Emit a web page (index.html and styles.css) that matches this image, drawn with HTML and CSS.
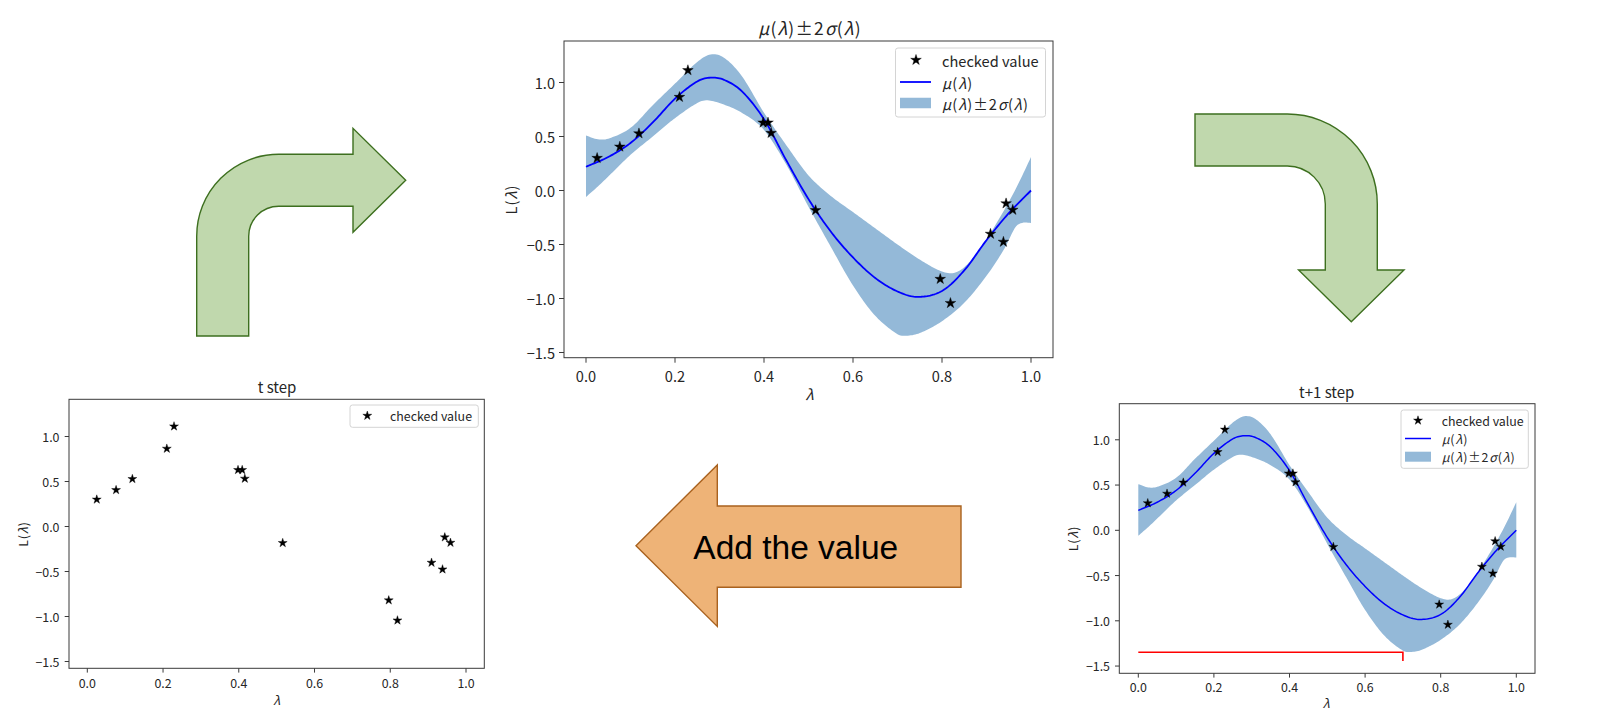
FILE: index.html
```html
<!DOCTYPE html>
<html lang="en">
<head>
<meta charset="utf-8">
<title>Bayesian optimization: t step to t+1 step</title>
<link rel="stylesheet" href="styles.css">
</head>
<body>
<main class="slide">
  <svg class="fig fig--left plot plot--side" id="plot-left" viewBox="0 370 500 346" aria-label="t step"></svg>
  <svg class="fig fig--top plot plot--top" id="plot-top" viewBox="480 0 600 410" aria-label="mu plus minus two sigma"></svg>
  <svg class="fig fig--right plot plot--side" id="plot-right" viewBox="1040 370 560 346" aria-label="t+1 step"></svg>

  <svg class="fig fig--arrow-in" viewBox="180 115 240 235" aria-hidden="true">
    <path class="arrow arrow--green" d="M196.7,336 L196.7,236.3 A82,82 0 0 1 278.7,154.3 L353,154.3 L353,128.3 L405.7,180.3 L353,232.3 L353,206.3 L278.7,206.3 A30,30 0 0 0 248.7,236.3 L248.7,336 Z"/>
  </svg>
  <svg class="fig fig--arrow-out" viewBox="1180 100 240 240" aria-hidden="true">
    <path class="arrow arrow--green" d="M1195,114 L1287.3,114 A90,90 0 0 1 1377.3,204 L1377.3,270 L1404,270 L1351.3,321.7 L1298.6,270 L1325.3,270 L1325.3,204 A38,38 0 0 0 1287.3,166 L1195,166 Z"/>
  </svg>
  <svg class="fig fig--arrow-add" viewBox="620 450 360 190">
    <path class="arrow arrow--orange" d="M636,545.7 L717.3,465 L717.3,506 L961,506 L961,587.3 L717.3,587.3 L717.3,626.4 Z"/>
    <text class="arrow-text" x="693.3" y="547" dominant-baseline="central">Add the value</text>
  </svg>
</main>
<script src="script.js"></script>
</body>
</html>
```

FILE: styles.css
```css
html, body {
  margin: 0;
  padding: 0;
  background: #ffffff;
}

.slide {
  position: relative;
  width: 1600px;
  height: 716px;
  overflow: hidden;
  background: #ffffff;
  font-family: "Noto Sans CJK JP", "Noto Sans", sans-serif;
}

.fig {
  position: absolute;
  display: block;
  overflow: visible;
}

.fig--left { left: 0; top: 370px; width: 500px; height: 346px; }
.fig--top { left: 480px; top: 0; width: 600px; height: 410px; }
.fig--right { left: 1040px; top: 370px; width: 560px; height: 346px; }
.fig--arrow-in { left: 180px; top: 115px; width: 240px; height: 235px; }
.fig--arrow-out { left: 1180px; top: 100px; width: 240px; height: 240px; }
.fig--arrow-add { left: 620px; top: 450px; width: 360px; height: 190px; }

.arrow { stroke-width: 1.4; stroke-linejoin: miter; }
.arrow--green { fill: #c0d8ad; stroke: #3d6f1f; }
.arrow--orange { fill: #eeb377; stroke: #a9621f; }

.arrow-text {
  font-family: "Liberation Sans", Arial, sans-serif;
  font-size: 33.5px;
  fill: #000000;
}

.plot text {
  fill: #262626;
  font-family: "Noto Sans CJK JP", "Noto Sans", sans-serif;
}

.plot--side .tick-label,
.plot--side .legend-text,
.plot--side .axis-label { font-size: 12.4px; }
.plot--side .title { font-size: 15px; }

.plot--top .tick-label,
.plot--top .legend-text,
.plot--top .axis-label { font-size: 14.6px; }
.plot--top .title { font-size: 17.4px; }

.plot .it { font-style: italic; }
.plot .math { letter-spacing: 0.07em; }

.band { fill: rgb(148, 185, 216); stroke: none; }
.mu { fill: none; stroke: #0000ff; stroke-linejoin: round; stroke-linecap: butt; }
.star { fill: #000000; stroke: #000000; stroke-width: 0.4; stroke-linejoin: miter; }
.spine { fill: none; stroke: #3a3a3a; stroke-width: 1; }
.tick { stroke: #3a3a3a; stroke-width: 1; }
.legend-box { fill: #ffffff; fill-opacity: 0.8; stroke: #d4d4d4; stroke-width: 1; }
.legend-patch { fill: rgb(148, 185, 216); }
.red-mark { fill: none; stroke: #ff0000; stroke-width: 1.6; }
```

FILE: script.js
```js
(function () {
  var NS = 'http://www.w3.org/2000/svg';

  function el(tag, attrs, parent, text) {
    var e = document.createElementNS(NS, tag);
    for (var k in attrs) e.setAttribute(k, attrs[k]);
    if (text !== undefined) e.textContent = text;
    parent.appendChild(e);
    return e;
  }

  var MU = [[0,0.22],[0.05,0.31],[0.1,0.44],[0.15,0.63],[0.2,0.85],[0.25,1.01],[0.28,1.045],[0.31,1.025],[0.35,0.92],[0.4,0.66],[0.45,0.28],[0.5,-0.08],[0.55,-0.38],[0.6,-0.62],[0.65,-0.81],[0.7,-0.935],[0.745,-0.985],[0.8,-0.93],[0.85,-0.74],[0.9,-0.46],[0.95,-0.21],[1.0,0.0]];
  var UP = [[0,0.51],[0.025,0.475],[0.05,0.48],[0.1,0.58],[0.15,0.79],[0.2,0.99],[0.25,1.19],[0.28,1.26],[0.31,1.23],[0.35,1.06],[0.4,0.72],[0.45,0.42],[0.5,0.14],[0.55,-0.05],[0.6,-0.2],[0.65,-0.35],[0.7,-0.5],[0.75,-0.64],[0.8,-0.75],[0.83,-0.76],[0.86,-0.67],[0.9,-0.45],[0.94,-0.18],[0.97,0.05],[1.0,0.31]];
  var LO = [[0,-0.06],[0.03,0.05],[0.06,0.17],[0.1,0.33],[0.15,0.5],[0.2,0.67],[0.25,0.81],[0.27,0.835],[0.3,0.81],[0.35,0.72],[0.4,0.56],[0.45,0.24],[0.5,-0.15],[0.55,-0.52],[0.6,-0.88],[0.65,-1.16],[0.7,-1.33],[0.72,-1.345],[0.75,-1.32],[0.8,-1.21],[0.85,-1.04],[0.9,-0.79],[0.94,-0.54],[0.965,-0.34],[0.98,-0.3],[1.0,-0.3]];
  var PTS = [[0.025,0.30],[0.076,0.405],[0.119,0.528],[0.21,0.865],[0.229,1.113],[0.398,0.628],[0.409,0.628],[0.416,0.532],[0.516,-0.183],[0.796,-0.82],[0.819,-1.043],[0.909,-0.402],[0.938,-0.476],[0.944,-0.12],[0.959,-0.18]];

  function slope(p, j) {
    var n = p.length;
    if (j === 0) return (p[1][1] - p[0][1]) / (p[1][0] - p[0][0]);
    if (j === n - 1) return (p[n-1][1] - p[n-2][1]) / (p[n-1][0] - p[n-2][0]);
    return (p[j+1][1] - p[j-1][1]) / (p[j+1][0] - p[j-1][0]);
  }

  function spline(p, x) {
    var n = p.length;
    if (x <= p[0][0]) return p[0][1];
    if (x >= p[n-1][0]) return p[n-1][1];
    var i = 0;
    while (x > p[i+1][0]) i++;
    var x0 = p[i][0], y0 = p[i][1], x1 = p[i+1][0], y1 = p[i+1][1];
    var h = x1 - x0, t = (x - x0) / h;
    var m0 = slope(p, i) * h, m1 = slope(p, i + 1) * h;
    var t2 = t * t, t3 = t2 * t;
    return (2*t3 - 3*t2 + 1) * y0 + (t3 - 2*t2 + t) * m0 + (-2*t3 + 3*t2) * y1 + (t3 - t2) * m1;
  }

  function starPath(cx, cy, R) {
    var d = '';
    for (var k = 0; k < 10; k++) {
      var a = -Math.PI / 2 + k * Math.PI / 5;
      var r = (k % 2) ? R * 0.382 : R;
      d += (k ? 'L' : 'M') + (cx + r * Math.cos(a)).toFixed(2) + ',' + (cy + r * Math.sin(a)).toFixed(2);
    }
    return d + 'Z';
  }

  function mathInto(t, str) {
    t.setAttribute('class', (t.getAttribute('class') || '') + ' math');
    for (var i = 0; i < str.length; i++) {
      var ch = str.charAt(i);
      var s = el('tspan', {}, t, ch);
      if ('μλσ'.indexOf(ch) >= 0) s.setAttribute('class', 'it');
    }
  }

  var PLOTS = [
    { id: 'plot-left', axes: [69, 399.3, 484.3, 668.3], x0: 87.3, x1: 466, y0: 526.5, ppu: 90,
      gp: false, tl: 4.3, xty: 683.3, ytx: 59.5, star: 4.7,
      title: { x: 277, y: 386.7, text: 't step' }, xlabel: { x: 277, y: 700 }, ylabel: { x: 23, y: 534 },
      legend: { box: [350, 405, 128.3, 22.3], rows: [415.7], sx: 367.3, hx: [354, 380], tx: 390, ph: 10 } },
    { id: 'plot-top', axes: [564, 41, 1053, 357.7], x0: 586, x1: 1031, y0: 190.5, ppu: 108,
      gp: true, lw: 1.8, tl: 5, xty: 375, ytx: 555, star: 5.6,
      title: { x: 810, y: 26.7, math: 'μ(λ)±2σ(λ)' }, xlabel: { x: 810, y: 393.3 }, ylabel: { x: 510, y: 199.5 },
      legend: { box: [895.5, 48, 150, 69], rows: [60, 82, 103], sx: 916, hx: [900, 931], tx: 942, ph: 10.5 } },
    { id: 'plot-right', axes: [1119.3, 403.7, 1535, 673.3], x0: 1138.3, x1: 1516.3, y0: 530.3, ppu: 90.5,
      gp: true, lw: 1.5, tl: 4.3, xty: 687.3, ytx: 1110, star: 4.7, red: true,
      title: { x: 1326.7, y: 391.7, text: 't+1 step' }, xlabel: { x: 1326.7, y: 703.3 }, ylabel: { x: 1073, y: 538.5 },
      legend: { box: [1401, 410, 127.3, 58.3], rows: [420.5, 438.5, 456.7], sx: 1418, hx: [1405, 1431], tx: 1441.7, ph: 10 } }
  ];

  PLOTS.forEach(function (c) {
    var svg = document.getElementById(c.id);
    if (!svg) return;
    var X = function (v) { return c.x0 + v * (c.x1 - c.x0); };
    var Y = function (v) { return c.y0 - v * c.ppu; };
    var a = c.axes;

    var defs = el('defs', {}, svg);
    var cp = el('clipPath', { id: c.id + '-clip' }, defs);
    el('rect', { x: a[0], y: a[1], width: a[2] - a[0], height: a[3] - a[1] }, cp);
    var g = el('g', { 'clip-path': 'url(#' + c.id + '-clip)' }, svg);

    var N = 300, i, v;
    if (c.gp) {
      var d = '';
      for (i = 0; i <= N; i++) { v = i / N; d += (i ? 'L' : 'M') + X(v).toFixed(2) + ',' + Y(spline(UP, v)).toFixed(2); }
      for (i = N; i >= 0; i--) { v = i / N; d += 'L' + X(v).toFixed(2) + ',' + Y(spline(LO, v)).toFixed(2); }
      el('path', { d: d + 'Z', 'class': 'band' }, g);
      var m = '';
      for (i = 0; i <= N; i++) { v = i / N; m += (i ? 'L' : 'M') + X(v).toFixed(2) + ',' + Y(spline(MU, v)).toFixed(2); }
      el('path', { d: m, 'class': 'mu', 'stroke-width': c.lw }, g);
    }
    if (c.red) {
      var ry = 652.3;
      el('path', { d: 'M' + X(0).toFixed(2) + ',' + ry + ' H' + X(0.7).toFixed(2) + ' V661', 'class': 'red-mark' }, g);
    }
    PTS.forEach(function (p) {
      el('path', { d: starPath(X(p[0]), Y(p[1]), c.star), 'class': 'star' }, g);
    });

    el('rect', { x: a[0], y: a[1], width: a[2] - a[0], height: a[3] - a[1], 'class': 'spine' }, svg);

    [0, 0.2, 0.4, 0.6, 0.8, 1.0].forEach(function (t) {
      var x = X(t);
      el('line', { x1: x, y1: a[3], x2: x, y2: a[3] + c.tl, 'class': 'tick' }, svg);
      el('text', { x: x, y: c.xty, 'text-anchor': 'middle', 'dominant-baseline': 'central', 'class': 'tick-label' }, svg, t.toFixed(1));
    });
    [-1.5, -1.0, -0.5, 0, 0.5, 1.0].forEach(function (t) {
      var y = Y(t);
      el('line', { x1: a[0] - c.tl, y1: y, x2: a[0], y2: y, 'class': 'tick' }, svg);
      var lab = (t < 0 ? '\u2212' : '') + Math.abs(t).toFixed(1);
      el('text', { x: c.ytx, y: y, 'text-anchor': 'end', 'dominant-baseline': 'central', 'class': 'tick-label' }, svg, lab);
    });

    var tt = el('text', { x: c.title.x, y: c.title.y, 'text-anchor': 'middle', 'dominant-baseline': 'central', 'class': 'title' }, svg);
    if (c.title.math) mathInto(tt, c.title.math); else tt.textContent = c.title.text;

    var xl = el('text', { x: c.xlabel.x, y: c.xlabel.y, 'text-anchor': 'middle', 'dominant-baseline': 'central', 'class': 'axis-label' }, svg);
    mathInto(xl, 'λ');
    var yl = el('text', { x: c.ylabel.x, y: c.ylabel.y, 'text-anchor': 'middle', 'dominant-baseline': 'central', 'class': 'axis-label',
      transform: 'rotate(-90 ' + c.ylabel.x + ' ' + c.ylabel.y + ')' }, svg);
    mathInto(yl, 'L(λ)');

    var L = c.legend, b = L.box;
    el('rect', { x: b[0], y: b[1], width: b[2], height: b[3], rx: 2.5, ry: 2.5, 'class': 'legend-box' }, svg);
    el('path', { d: starPath(L.sx, L.rows[0], c.star), 'class': 'star' }, svg);
    el('text', { x: L.tx, y: L.rows[0], 'dominant-baseline': 'central', 'class': 'legend-text' }, svg, 'checked value');
    if (c.gp) {
      el('line', { x1: L.hx[0], y1: L.rows[1], x2: L.hx[1], y2: L.rows[1], 'class': 'mu', 'stroke-width': c.lw }, svg);
      var t1 = el('text', { x: L.tx, y: L.rows[1], 'dominant-baseline': 'central', 'class': 'legend-text' }, svg);
      mathInto(t1, 'μ(λ)');
      el('rect', { x: L.hx[0], y: L.rows[2] - L.ph / 2, width: L.hx[1] - L.hx[0], height: L.ph, 'class': 'legend-patch' }, svg);
      var t2 = el('text', { x: L.tx, y: L.rows[2], 'dominant-baseline': 'central', 'class': 'legend-text' }, svg);
      mathInto(t2, 'μ(λ)±2σ(λ)');
    }
  });
})();
```
